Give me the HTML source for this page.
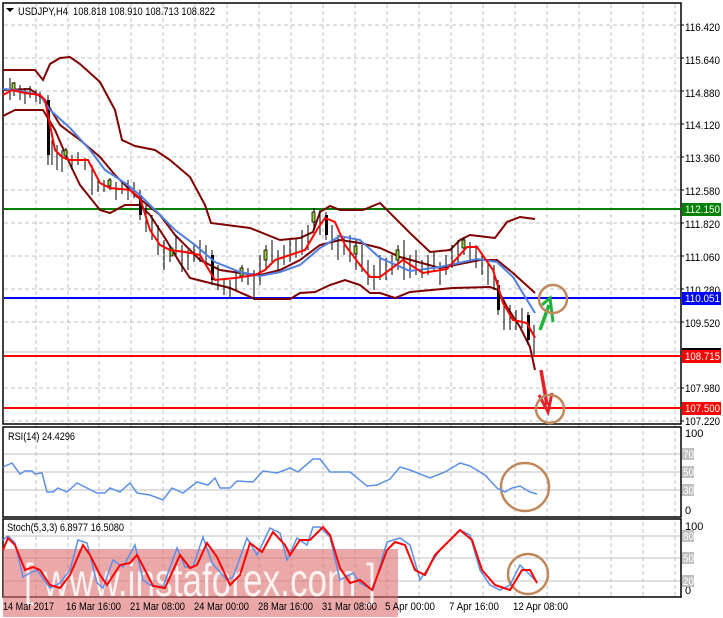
<!DOCTYPE html>
<html><head><meta charset="utf-8"><style>
html,body{margin:0;padding:0;background:#fff;}
body{width:723px;height:618px;overflow:hidden;position:relative;font-family:"Liberation Sans",sans-serif;}
svg{position:absolute;left:0;top:0;}
text{font-family:"Liberation Sans",sans-serif;font-size:11px;fill:#000;}
</style></head><body>
<svg width="723" height="618" viewBox="0 0 723 618">
<g stroke="#c0c0c0" stroke-dasharray="4,3" stroke-width="1">
<path d="M36 4V596M68 4V596M99 4V596M131 4V596M163 4V596M195 4V596M227 4V596M259 4V596M291 4V596M323 4V596M355 4V596M387 4V596M419 4V596M451 4V596M483 4V596M515 4V596M547 4V596M579 4V596M611 4V596M643 4V596M675 4V596"/>
<path d="M4 25H680M4 58H680M4 91H680M4 124H680M4 157H680M4 190H680M4 223H680M4 256H680M4 289H680M4 322H680M4 388H680M4 421H680"/>
</g>
<g fill="none" stroke="#000" stroke-width="1.5">
<rect x="3" y="3" width="678" height="421"/>
<rect x="3" y="427" width="678" height="90"/>
<rect x="3" y="519" width="678" height="78"/>
</g>
<g stroke="#c0c0c0" stroke-width="1">
<path d="M4 454H680M4 472H680M4 490H680M4 536H680M4 558H680M4 581H680"/>
<path d="M4 352H680"/>
</g>
<path d="M4 209H681" stroke="#008000" stroke-width="2"/>
<path d="M4 298H681" stroke="#0000ff" stroke-width="2"/>
<path d="M4 356H681" stroke="#ff0000" stroke-width="2"/>
<path d="M4 408H681" stroke="#ff0000" stroke-width="2"/>
<g fill="none" stroke="#800000" stroke-width="2">
<polyline points="3,70 35,70 43,80 50,64 60,58 70,57 80,64 100,82 115,110 122,140 135,146 155,150 170,160 190,177 205,205 211,223 250,228 280,240 300,238 313,232 320,212 330,206 340,210 363,210 380,203 410,233 430,252 450,250 460,240 470,235 495,238 507,222 520,217 535,219"/>
<polyline points="3,90 30,89 45,100 60,125 80,140 100,157 115,175 135,195 160,215 175,235 200,260 220,270 240,273 260,275 280,270 300,260 320,245 340,240 360,243 380,248 400,257 440,268 480,260 497,260 513,273 535,293"/>
<polyline points="3,116 15,110 43,110 55,130 68,160 80,185 100,210 110,213 125,205 140,205 150,215 165,238 180,263 190,278 210,283 230,288 255,299 290,299 300,293 315,292 330,285 345,280 360,285 370,293 380,293 395,298 410,292 453,288 490,287 498,290 507,307 520,327 530,347 535,370"/>
</g>
<g stroke="#000" stroke-width="1">
<path d="M10 78V100M14 82V96M20 85V100M25 88V104M30 86V98M36 90V102M40 92V104M48 95V165M52 140V165M57 145V170M62 150V172M66 148V160M72 155V170M78 152V165M85 158V170M92 165V195M98 178V192M104 180V192M110 178V190M116 182V200M122 180V194M128 180V200M134 182V198M140 190V220M146 205V232M152 215V240M158 225V255M164 240V270M170 245V262M176 235V255M182 245V272M188 250V270M194 245V262M200 240V262M206 245V265M212 250V285M218 265V290M224 278V295M230 280V298M236 270V290M242 265V282M248 268V285M254 270V300M260 255V285M266 245V270M272 240V262M278 250V270M284 245V265M290 240V262M296 238V258M302 230V255M308 225V250M314 208V230M320 210V235M326 212V240M332 225V250M338 235V260M344 238V255M350 235V262M356 240V270M362 245V272M368 260V285M374 265V290M380 255V280M386 258V280M392 255V275M398 245V270M404 240V280M410 255V278M416 250V275M422 260V278M428 255V275M434 252V272M440 262V285M446 255V275M452 245V268M458 240V262M464 237V255M470 242V262M476 245V268M482 255V275M488 260V285M494 265V290M498 280V315M504 300V330M510 305V330M516 310V330M522 308V328M528 312V345M534 325V355"/>
</g>
<g fill="#9acd32" stroke="#000" stroke-width="0.8">
<rect x="12" y="83" width="3" height="8"/><rect x="64" y="150" width="3" height="6"/><rect x="108" y="180" width="3" height="6"/><rect x="170" y="248" width="3" height="8"/><rect x="264" y="250" width="3" height="10"/><rect x="312" y="212" width="3" height="10"/><rect x="396" y="250" width="3" height="10"/><rect x="462" y="240" width="3" height="8"/><rect x="240" y="268" width="3" height="8"/><rect x="354" y="246" width="3" height="8"/>
</g>
<g fill="#000">
<rect x="47" y="100" width="3" height="55"/><rect x="139" y="195" width="3" height="20"/><rect x="211" y="255" width="3" height="25"/><rect x="325" y="215" width="3" height="20"/><rect x="497" y="285" width="3" height="25"/><rect x="527" y="315" width="3" height="25"/>
</g>
<polyline fill="none" stroke="#4f7fe0" stroke-width="2" points="3,89 15,90 40,95 50,110 70,128 90,150 105,170 125,183 140,195 155,210 175,230 195,245 215,262 240,272 260,276 280,272 300,265 320,248 340,236 360,240 380,258 410,271 440,267 477,259 497,262 513,277 535,313"/>
<polyline fill="none" stroke="#ff0000" stroke-width="2" points="3,95 12,90 25,93 40,95 45,100 55,150 62,157 70,160 88,160 100,183 110,188 130,190 140,198 150,230 160,245 170,250 185,252 200,255 215,280 235,278 255,275 265,270 275,260 290,255 305,250 318,228 325,218 335,222 345,245 360,265 370,277 380,277 403,260 423,273 447,269 467,247 477,247 493,270 503,303 513,320 527,323 535,338"/>
<path d="M540 330L549 305" stroke="#1eb33c" stroke-width="3.5" fill="none"/>
<path d="M542 305L550 298L553 322" stroke="#1eb33c" stroke-width="3" fill="none"/>
<path d="M541 370L547 405" stroke="#e8202a" stroke-width="3.5" fill="none"/>
<path d="M539 395L548 412L552 393" stroke="#e8202a" stroke-width="3" fill="none"/>
<g fill="none" stroke="#c0875a" stroke-width="2.5">
<circle cx="553" cy="299" r="14"/>
<circle cx="550" cy="409" r="14"/>
<circle cx="525" cy="487" r="24"/>
<circle cx="528" cy="574" r="20"/>
</g>
<polyline fill="none" stroke="#5b8fe8" stroke-width="1.5" points="3,467 12,463 20,474 25,471 32,471 35,474 42,473 47,492 53,492 58,488 67,492 77,483 87,488 97,493 105,493 110,488 120,492 130,483 137,493 150,495 163,500 172,488 183,493 197,482 208,485 215,478 220,488 230,488 237,481 253,482 263,471 277,473 290,468 298,472 313,459 320,459 330,472 350,472 367,486 377,485 390,479 400,467 410,470 430,478 445,472 460,463 470,466 485,475 497,488 505,492 512,488 520,486 530,492 537,494"/>
<rect x="3" y="549" width="395" height="68" fill="#dc6e70" opacity="0.6"/>
<text x="24" y="596" textLength="352" lengthAdjust="spacingAndGlyphs" style="font-size:46px;fill:#fff;opacity:0.85">[ www.instaforex.com ]</text>
<polyline fill="none" stroke="#5b8fe8" stroke-width="1.5" points="3,540 8,536 15,543 23,577 30,573 37,570 50,588 60,583 70,570 78,540 87,543 97,583 103,588 113,560 123,567 135,545 143,580 150,585 163,587 177,548 185,567 193,567 203,537 212,563 227,580 233,577 247,538 257,555 270,528 280,533 287,560 297,538 307,545 313,527 320,527 330,537 340,580 353,573 360,583 373,590 387,542 400,538 410,545 420,580 430,565 440,550 450,540 460,530 470,535 480,570 490,585 500,590 510,585 520,565 530,575 537,582"/>
<polyline fill="none" stroke="#ff0000" stroke-width="2" points="3,550 8,538 15,545 25,570 33,567 40,570 50,585 60,588 70,575 83,545 90,555 100,575 107,585 120,565 130,563 137,555 145,570 153,586 165,588 180,555 190,568 197,565 207,543 217,557 230,585 240,575 250,543 262,552 273,532 285,545 290,555 300,540 310,540 323,527 330,535 340,568 350,583 360,580 372,590 387,550 395,542 405,545 415,570 425,575 435,555 445,545 460,530 472,540 482,570 495,585 510,590 522,570 530,570 537,583"/>
<path d="M6 8H14L10 12Z" fill="#000"/>
<text x="18" y="15" textLength="197" lengthAdjust="spacingAndGlyphs">USDJPY,H4&#160;&#160;108.818 108.910 108.713 108.822</text>
<text x="8" y="440" textLength="67" lengthAdjust="spacingAndGlyphs">RSI(14) 24.4296</text>
<text x="7" y="531" textLength="117" lengthAdjust="spacingAndGlyphs">Stoch(5,3,3) 6.8977 16.5080</text>
<g>
<text x="685" y="31" textLength="35" lengthAdjust="spacingAndGlyphs">116.420</text><text x="685" y="64" textLength="35" lengthAdjust="spacingAndGlyphs">115.640</text><text x="685" y="97" textLength="35" lengthAdjust="spacingAndGlyphs">114.880</text><text x="685" y="129" textLength="35" lengthAdjust="spacingAndGlyphs">114.120</text><text x="685" y="162" textLength="35" lengthAdjust="spacingAndGlyphs">113.360</text><text x="685" y="195" textLength="35" lengthAdjust="spacingAndGlyphs">112.580</text><text x="685" y="228" textLength="35" lengthAdjust="spacingAndGlyphs">111.820</text><text x="685" y="261" textLength="35" lengthAdjust="spacingAndGlyphs">111.060</text><text x="685" y="294" textLength="35" lengthAdjust="spacingAndGlyphs">110.280</text><text x="685" y="327" textLength="35" lengthAdjust="spacingAndGlyphs">109.520</text><text x="685" y="392" textLength="35" lengthAdjust="spacingAndGlyphs">107.980</text><text x="685" y="425" textLength="35" lengthAdjust="spacingAndGlyphs">107.220</text>
<text x="685" y="437">100</text><text x="685" y="514">0</text><text x="685" y="530">100</text><text x="685" y="594">0</text>
</g>
<g stroke="#000" stroke-width="1"><path d="M681 25h3M681 58h3M681 91h3M681 124h3M681 157h3M681 190h3M681 223h3M681 256h3M681 289h3M681 322h3M681 388h3M681 421h3"/></g>
<rect x="682" y="348" width="39" height="6" fill="#000"/>
<rect x="682" y="203" width="39" height="13" fill="#008000"/><text x="685" y="213" textLength="35" lengthAdjust="spacingAndGlyphs" style="fill:#fff">112.150</text>
<rect x="682" y="292" width="39" height="13" fill="#0000ff"/><text x="685" y="302" textLength="35" lengthAdjust="spacingAndGlyphs" style="fill:#fff">110.051</text>
<rect x="682" y="350" width="39" height="13" fill="#ff0000"/><text x="685" y="360" textLength="35" lengthAdjust="spacingAndGlyphs" style="fill:#fff">108.715</text>
<rect x="682" y="402" width="39" height="13" fill="#ff0000"/><text x="685" y="412" textLength="35" lengthAdjust="spacingAndGlyphs" style="fill:#fff">107.500</text>
<g fill="#c0c0c0"><rect x="682" y="448" width="12" height="12"/><rect x="682" y="466" width="12" height="12"/><rect x="682" y="484" width="12" height="12"/><rect x="682" y="530" width="12" height="12"/><rect x="682" y="552" width="12" height="12"/><rect x="682" y="575" width="12" height="12"/></g>
<g><text x="683" y="458" textLength="11" lengthAdjust="spacingAndGlyphs" style="fill:#fff">70</text><text x="683" y="476" textLength="11" lengthAdjust="spacingAndGlyphs" style="fill:#fff">50</text><text x="683" y="494" textLength="11" lengthAdjust="spacingAndGlyphs" style="fill:#fff">30</text><text x="683" y="540" textLength="11" lengthAdjust="spacingAndGlyphs" style="fill:#fff">80</text><text x="683" y="562" textLength="11" lengthAdjust="spacingAndGlyphs" style="fill:#fff">50</text><text x="683" y="585" textLength="11" lengthAdjust="spacingAndGlyphs" style="fill:#fff">20</text></g>
<g><text x="3" y="610" textLength="51" lengthAdjust="spacingAndGlyphs">14 Mar 2017</text><text x="66" y="610" textLength="55" lengthAdjust="spacingAndGlyphs">16 Mar 16:00</text><text x="130" y="610" textLength="55" lengthAdjust="spacingAndGlyphs">21 Mar 08:00</text><text x="194" y="610" textLength="55" lengthAdjust="spacingAndGlyphs">24 Mar 00:00</text><text x="258" y="610" textLength="55" lengthAdjust="spacingAndGlyphs">28 Mar 16:00</text><text x="322" y="610" textLength="55" lengthAdjust="spacingAndGlyphs">31 Mar 08:00</text><text x="385" y="610" textLength="50" lengthAdjust="spacingAndGlyphs">5 Apr 00:00</text><text x="449" y="610" textLength="50" lengthAdjust="spacingAndGlyphs">7 Apr 16:00</text><text x="513" y="610" textLength="55" lengthAdjust="spacingAndGlyphs">12 Apr 08:00</text></g>
</svg>
</body></html>
